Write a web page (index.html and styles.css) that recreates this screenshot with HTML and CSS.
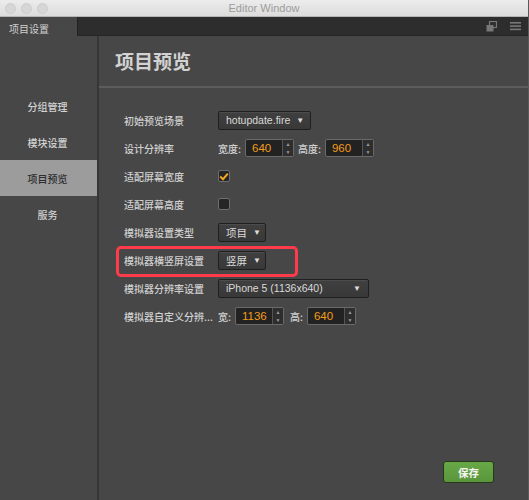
FILE: index.html
```html
<!DOCTYPE html>
<html>
<head>
<meta charset="utf-8">
<link rel="stylesheet" href="styles.css">
</head>
<body>
<div class="window">
  <div class="titlebar">
    <div class="lights"><span class="light"></span><span class="light"></span><span class="light"></span></div>
    <div class="title">Editor Window</div>
  </div>
  <div class="tabbar">
    <div class="tab">项目设置</div>
    <div class="tabrest">
      <svg class="ticon" width="11" height="11" viewBox="0 0 11 11"><rect x="3.5" y="0.5" width="7" height="6" fill="none" stroke="#777" stroke-width="1.2"/><rect x="0.5" y="4" width="7" height="6.5" fill="#777"/></svg>
      <svg class="ticon" width="11" height="10" viewBox="0 0 11 10"><rect x="0" y="1" width="11" height="1.6" fill="#777"/><rect x="0" y="4.3" width="11" height="1.6" fill="#777"/><rect x="0" y="7.6" width="11" height="1.6" fill="#777"/></svg>
    </div>
  </div>
  <div class="main">
    <div class="sidebar">
      <div class="navitem">分组管理</div>
      <div class="navitem">模块设置</div>
      <div class="navitem active">项目预览</div>
      <div class="navitem">服务</div>
    </div>
    <div class="content">
      <div class="header">项目预览</div>
      <div class="rows">
        <div class="row">
          <div class="label">初始预览场景</div>
          <div class="select w93">hotupdate.fire<span class="caret">▼</span></div>
        </div>
        <div class="row">
          <div class="label">设计分辨率</div>
          <span class="sub">宽度:</span>
          <div class="num"><span class="val">640</span><span class="spin"><span>▲</span><span>▼</span></span></div>
          <span class="sub sub2">高度:</span>
          <div class="num"><span class="val">960</span><span class="spin"><span>▲</span><span>▼</span></span></div>
        </div>
        <div class="row">
          <div class="label">适配屏幕宽度</div>
          <div class="check checked"><svg width="10" height="9" viewBox="0 0 10 9"><path d="M1.2 4.6 L4 7.2 L8.8 1.6" fill="none" stroke="#f5a623" stroke-width="2"/></svg></div>
        </div>
        <div class="row">
          <div class="label">适配屏幕高度</div>
          <div class="check"></div>
        </div>
        <div class="row">
          <div class="label">模拟器设置类型</div>
          <div class="select w48">项目<span class="caret">▼</span></div>
        </div>
        <div class="row">
          <div class="label">模拟器横竖屏设置</div>
          <div class="select w48">竖屏<span class="caret">▼</span></div>
        </div>
        <div class="row">
          <div class="label">模拟器分辨率设置</div>
          <div class="select w151">iPhone 5 (1136x640)<span class="caret">▼</span></div>
        </div>
        <div class="row">
          <div class="label">模拟器自定义分辨...</div>
          <span class="sub">宽:</span>
          <div class="num"><span class="val">1136</span><span class="spin"><span>▲</span><span>▼</span></span></div>
          <span class="sub sub3">高:</span>
          <div class="num"><span class="val">640</span><span class="spin"><span>▲</span><span>▼</span></span></div>
        </div>
        <div class="highlight"></div>
      </div>
      <div class="footer">
        <div class="save">保存</div>
      </div>
    </div>
  </div>
</div>
</body>
</html>
```

FILE: styles.css
```css
* { box-sizing: border-box; }
html, body { margin: 0; padding: 0; }
body {
  width: 529px;
  height: 500px;
  overflow: hidden;
  background: #474747;
  font-family: "Liberation Sans", "Noto Sans CJK SC", sans-serif;
  font-size: 10.5px;
  color: #cfcfcf;
}
.window {
  width: 529px;
  height: 500px;
  display: flex;
  flex-direction: column;
  border-right: 1px solid #5a5a5a;
}
.titlebar {
  height: 17px;
  background: linear-gradient(#ececec, #dcdcdc);
  border-bottom: 1px solid #b5b5b5;
  position: relative;
  display: flex;
  align-items: center;
  justify-content: center;
}
.lights {
  position: absolute;
  left: 5px;
  top: 3px;
  display: flex;
  gap: 5px;
}
.light {
  width: 11px;
  height: 11px;
  border-radius: 50%;
  background: #d6d6d6;
  border: 1px solid #cdcdcd;
}
.title {
  font-family: "Liberation Sans", sans-serif;
  font-size: 11px;
  color: #9c9c9c;
}
.tabbar {
  height: 19px;
  display: flex;
}
.tab {
  width: 77px;
  background: #474747;
  font-family: "Noto Sans CJK SC", sans-serif;
  font-size: 10px;
  color: #d0d0d0;
  padding-left: 9px;
  display: flex;
  align-items: center;
  padding-top: 3px;
}
.tabrest {
  flex: 1;
  background: #2d2d2d;
  border-left: 1px solid #222;
  border-bottom: 1px solid #262626;
  display: flex;
  justify-content: flex-end;
  align-items: center;
  gap: 13px;
  padding-right: 7px;
}
.ticon { display: block; }
.main {
  flex: 1;
  display: flex;
  min-height: 0;
}
.sidebar {
  width: 99px;
  border-right: 2px solid #363636;
  padding-top: 52px;
  display: flex;
  flex-direction: column;
}
.navitem {
  height: 36px;
  display: flex;
  align-items: center;
  justify-content: center;
  font-family: "Noto Sans CJK SC", sans-serif;
  font-size: 10px;
  font-weight: 500;
  color: #d2d2d2;
  padding-right: 2px;
}
.navitem.active {
  background: #9c9c9c;
  color: #2e2e2e;
}
.content {
  flex: 1;
  display: flex;
  flex-direction: column;
}
.header {
  height: 52px;
  border-bottom: 2px solid #5c5c5c;
  padding-left: 16px;
  padding-bottom: 2px;
  display: flex;
  align-items: center;
  font-family: "Noto Sans CJK SC", sans-serif;
  font-size: 19px;
  font-weight: bold;
  color: #d2d2d2;
}
.rows {
  position: relative;
  padding-top: 18px;
  padding-left: 25px;
}
.row {
  height: 28px;
  display: flex;
  align-items: center;
}
.label {
  width: 94px;
  font-family: "Noto Sans CJK SC", sans-serif;
  font-size: 10px;
  font-weight: 500;
  color: #d0d0d0;
  white-space: nowrap;
}
.select {
  height: 19px;
  background: linear-gradient(#404040, #383838);
  border: 1px solid #1f1f1f;
  border-radius: 2px;
  box-shadow: inset 0 1px 0 #4c4c4c;
  display: flex;
  align-items: center;
  padding-left: 7px;
  padding-right: 7px;
  color: #dadada;
  font-family: "Liberation Sans", "Noto Sans CJK SC", sans-serif;
  font-size: 10.5px;
  justify-content: space-between;
  white-space: nowrap;
}
.w93 { width: 93px; }
.w48 { width: 48px; }
.w151 { width: 151px; }
.caret {
  font-size: 8px;
  color: #dcdcdc;
  margin-left: 6px;
}
.sub {
  font-family: "Noto Sans CJK SC", sans-serif;
  font-size: 10px;
  font-weight: 500;
  color: #d0d0d0;
  margin-right: 4px;
}
.sub2 { margin-left: 4px; }
.sub3 { margin-left: 6px; }
.num {
  width: 49px;
  height: 18px;
  background: #222;
  border: 1px solid #6a6a6a;
  border-radius: 2px;
  display: flex;
  align-items: stretch;
}
.val {
  flex: 1;
  padding-left: 6px;
  display: flex;
  align-items: center;
  color: #f39c1a;
  font-family: "Liberation Sans", sans-serif;
  font-size: 11.5px;
}
.spin {
  width: 11px;
  border-left: 1px solid #555;
  background: #2e2e2e;
  display: flex;
  flex-direction: column;
  justify-content: space-around;
  align-items: center;
  font-size: 5px;
  color: #9a9a9a;
  line-height: 1;
}
.check {
  width: 12px;
  height: 12px;
  background: #262626;
  border: 1px solid #6e6e6e;
  border-radius: 2px;
  display: flex;
  align-items: center;
  justify-content: center;
}
.check svg { display: block; }
.highlight {
  position: absolute;
  left: 17px;
  top: 158px;
  width: 182px;
  height: 31px;
  border: 3px solid #fe3a4b;
  border-radius: 5px;
}
.footer {
  flex: 1;
  display: flex;
  justify-content: flex-end;
  align-items: flex-end;
  padding-right: 34px;
  padding-bottom: 17px;
}
.save {
  width: 51px;
  height: 22px;
  background: linear-gradient(#68a847, #5a953b);
  border: 1px solid #253a1a;
  border-radius: 3px;
  display: flex;
  align-items: center;
  justify-content: center;
  font-family: "Noto Sans CJK SC", sans-serif;
  font-size: 10.5px;
  font-weight: bold;
  color: #f4f4f4;
}
```
